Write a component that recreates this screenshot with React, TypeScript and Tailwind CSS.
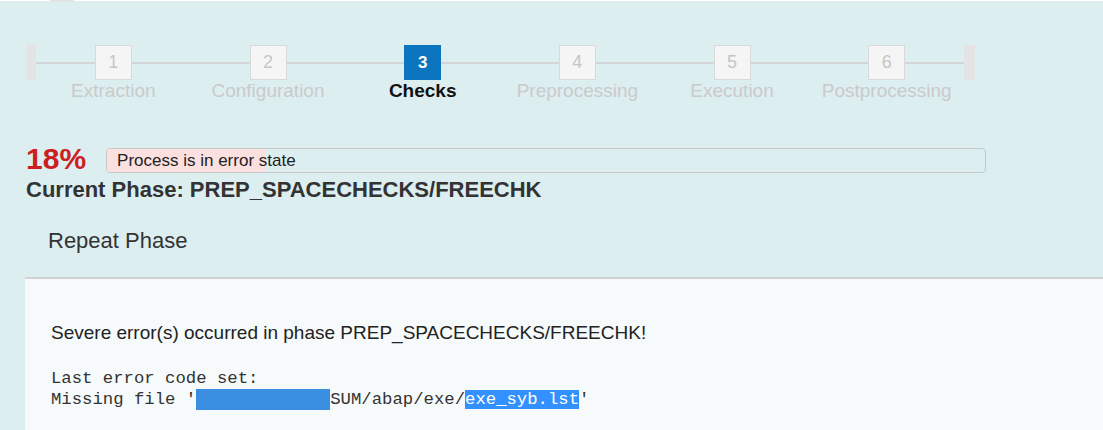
import React from 'react'

const steps = [
  { n: 1, label: 'Extraction' },
  { n: 2, label: 'Configuration' },
  { n: 3, label: 'Checks', active: true },
  { n: 4, label: 'Preprocessing' },
  { n: 5, label: 'Execution' },
  { n: 6, label: 'Postprocessing' },
]

function Stepper() {
  return (
    <div className="flex w-[949px] ml-[26px]">
      <div className="w-[10px] h-[35px] bg-[#e4e4e4]" />
      <div className="flex flex-1">
        {steps.map(s => (
          <div key={s.n} className="flex-1 flex flex-col items-center">
            <div className="flex items-center w-full h-[35px]">
              <div className="flex-1 h-[2px] bg-[#d3d5d6]" />
              {s.active ? (
                <div className="w-[37px] h-[35px] bg-[#0b76bf] flex items-center justify-center text-white font-bold text-[17px]">
                  {s.n}
                </div>
              ) : (
                <div className="w-[37px] h-[35px] bg-[#f5f5f5] border border-[#d8d8d8] flex items-center justify-center text-[#c6c6c6] text-[18px]">
                  {s.n}
                </div>
              )}
              <div className="flex-1 h-[2px] bg-[#d3d5d6]" />
            </div>
            <div
              className={`whitespace-nowrap text-[19px] leading-[22px] ${
                s.active ? 'text-[#111] font-bold' : 'text-[#cacaca]'
              }`}
            >
              {s.label}
            </div>
          </div>
        ))}
      </div>
      <div className="w-[11px] h-[35px] bg-[#e4e4e4]" />
    </div>
  )
}

export default function App() {
  const percent = 18

  return (
    <div className="h-[430px] w-full overflow-hidden bg-[#ddeef1] font-['Liberation_Sans',Arial,sans-serif]">
      {/* top strip */}
      <div className="flex h-px bg-white">
        <div className="ml-[50px] w-[24px] h-[2px] bg-[#e2e2e2]" />
      </div>

      <div className="pt-[44px]">
        <Stepper />
      </div>

      {/* progress */}
      <div className="flex items-start h-[34px] mt-[40px] ml-[26px]">
        <div className="text-[30px] leading-[34px] font-bold text-[#cc1f1f]">{percent}%</div>
        <div className="relative ml-[20px] mt-[6px] w-[880px] h-[25px] rounded-[4px] border-[1.5px] border-[#c4c8c9] overflow-hidden">
          <div className="h-full w-[18%] bg-[#fce0e0]" />
          <div className="absolute inset-0 pl-[10px] flex items-center text-[17px] text-[#222]">
            Process is in error state
          </div>
        </div>
      </div>

      <div className="mt-px ml-[26px] text-[22px] leading-[26px] font-bold text-[#333]">
        Current Phase: PREP_SPACECHECKS/FREECHK
      </div>

      <div className="mt-[25px] ml-[48px] text-[22px] leading-[26px] text-[#333]">Repeat Phase</div>

      {/* log panel */}
      <div className="mt-[23px] ml-[25px] h-[200px] bg-[#f6fafb] border-t-2 border-[#cfd3d4] pl-[26px] pt-[43px]">
        <div className="text-[19px] leading-[22px] text-[#222]">
          Severe error(s) occurred in phase PREP_SPACECHECKS/FREECHK!
        </div>
        <div className="mt-[24px] font-['Liberation_Mono',monospace] text-[17.3px] leading-[21px] text-[#333] whitespace-pre">
          <div>Last error code set:</div>
          <div>
            Missing file '<span className="inline-block align-top w-[134px] h-[21px] bg-[#3b8fe3]" />SUM/abap/exe/
            <span className="bg-[#3390ff] text-white">exe_syb.lst</span>'
          </div>
        </div>
      </div>
    </div>
  )
}
